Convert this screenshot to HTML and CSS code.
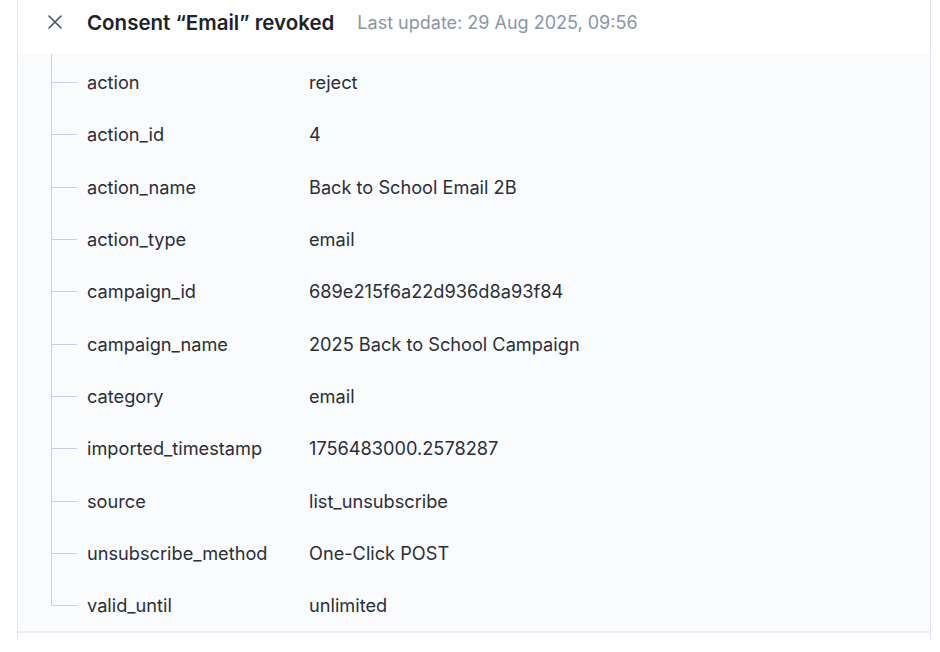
FILE: index.html
```html
<!DOCTYPE html>
<html lang="en">
<head>
<meta charset="utf-8">
<title>Consent revoked</title>
<link rel="stylesheet" href="styles.css">
</head>
<body>
<div class="frame">
  <div class="header">
    <button class="close" aria-label="Close">
      <svg width="16" height="16" viewBox="0 0 16 16"><path d="M2 2 L14 14 M14 2 L2 14" stroke="#4a5060" stroke-width="1.6" stroke-linecap="round" fill="none"/></svg>
    </button>
    <h1 class="title">Consent “Email” revoked</h1>
    <span class="updated">Last update: 29 Aug 2025, 09:56</span>
  </div>
  <div class="panel">
    <ul class="tree">
      <li class="row"><span class="key">action</span><span class="val">reject</span></li>
      <li class="row"><span class="key">action_id</span><span class="val">4</span></li>
      <li class="row"><span class="key">action_name</span><span class="val">Back to School Email 2B</span></li>
      <li class="row"><span class="key">action_type</span><span class="val">email</span></li>
      <li class="row"><span class="key">campaign_id</span><span class="val">689e215f6a22d936d8a93f84</span></li>
      <li class="row"><span class="key">campaign_name</span><span class="val">2025 Back to School Campaign</span></li>
      <li class="row"><span class="key">category</span><span class="val">email</span></li>
      <li class="row"><span class="key">imported_timestamp</span><span class="val">1756483000.2578287</span></li>
      <li class="row"><span class="key">source</span><span class="val">list_unsubscribe</span></li>
      <li class="row"><span class="key">unsubscribe_method</span><span class="val">One-Click POST</span></li>
      <li class="row last"><span class="key">valid_until</span><span class="val">unlimited</span></li>
    </ul>
  </div>
</div>
</body>
</html>
```
FILE: styles.css
```css
* { box-sizing: border-box; }
html, body { margin: 0; padding: 0; background: #ffffff; }
body {
  font-family: Inter, "Noto Sans", sans-serif;
  color: #2a2e38;
  -webkit-font-smoothing: antialiased;
}
.frame {
  margin-left: 17px;
  width: 914px;
  height: 640px;
  border-left: 1px solid #e4e7f1;
  border-right: 1px solid #e4e7f1;
}
.header {
  height: 54px;
  display: flex;
  align-items: center;
  padding: 0 0 10px 29px;
}
.close {
  width: 16px;
  height: 16px;
  padding: 0;
  border: 0;
  background: none;
  display: flex;
  align-items: center;
  justify-content: center;
  margin-right: 24px;
}
.title {
  margin: 0;
  font-size: 20.5px;
  font-weight: 600;
  color: #1d222c;
}
.updated {
  margin-left: 23px;
  font-size: 18px;
  color: #8b95a9;
}
.panel {
  background: #fafbfd;
  border-bottom: 2px solid #ebeef7;
  padding-top: 2px;
}
.tree {
  list-style: none;
  margin: 0;
  padding: 0 0 0 33px;
}
.row {
  position: relative;
  height: 52.3px;
  display: flex;
  align-items: center;
  padding-left: 36px;
  font-size: 18.2px;
}
.row::before {
  content: "";
  position: absolute;
  left: 0;
  top: -2px;
  bottom: 0;
  border-left: 1px solid #c9cfe3;
}
.row.last::before { bottom: 50%; }
.row::after {
  content: "";
  position: absolute;
  left: 0;
  top: 50%;
  width: 26px;
  border-top: 1px solid #c9cfe3;
}
.key { width: 222px; flex: none; }
.val { flex: 1; }
```
